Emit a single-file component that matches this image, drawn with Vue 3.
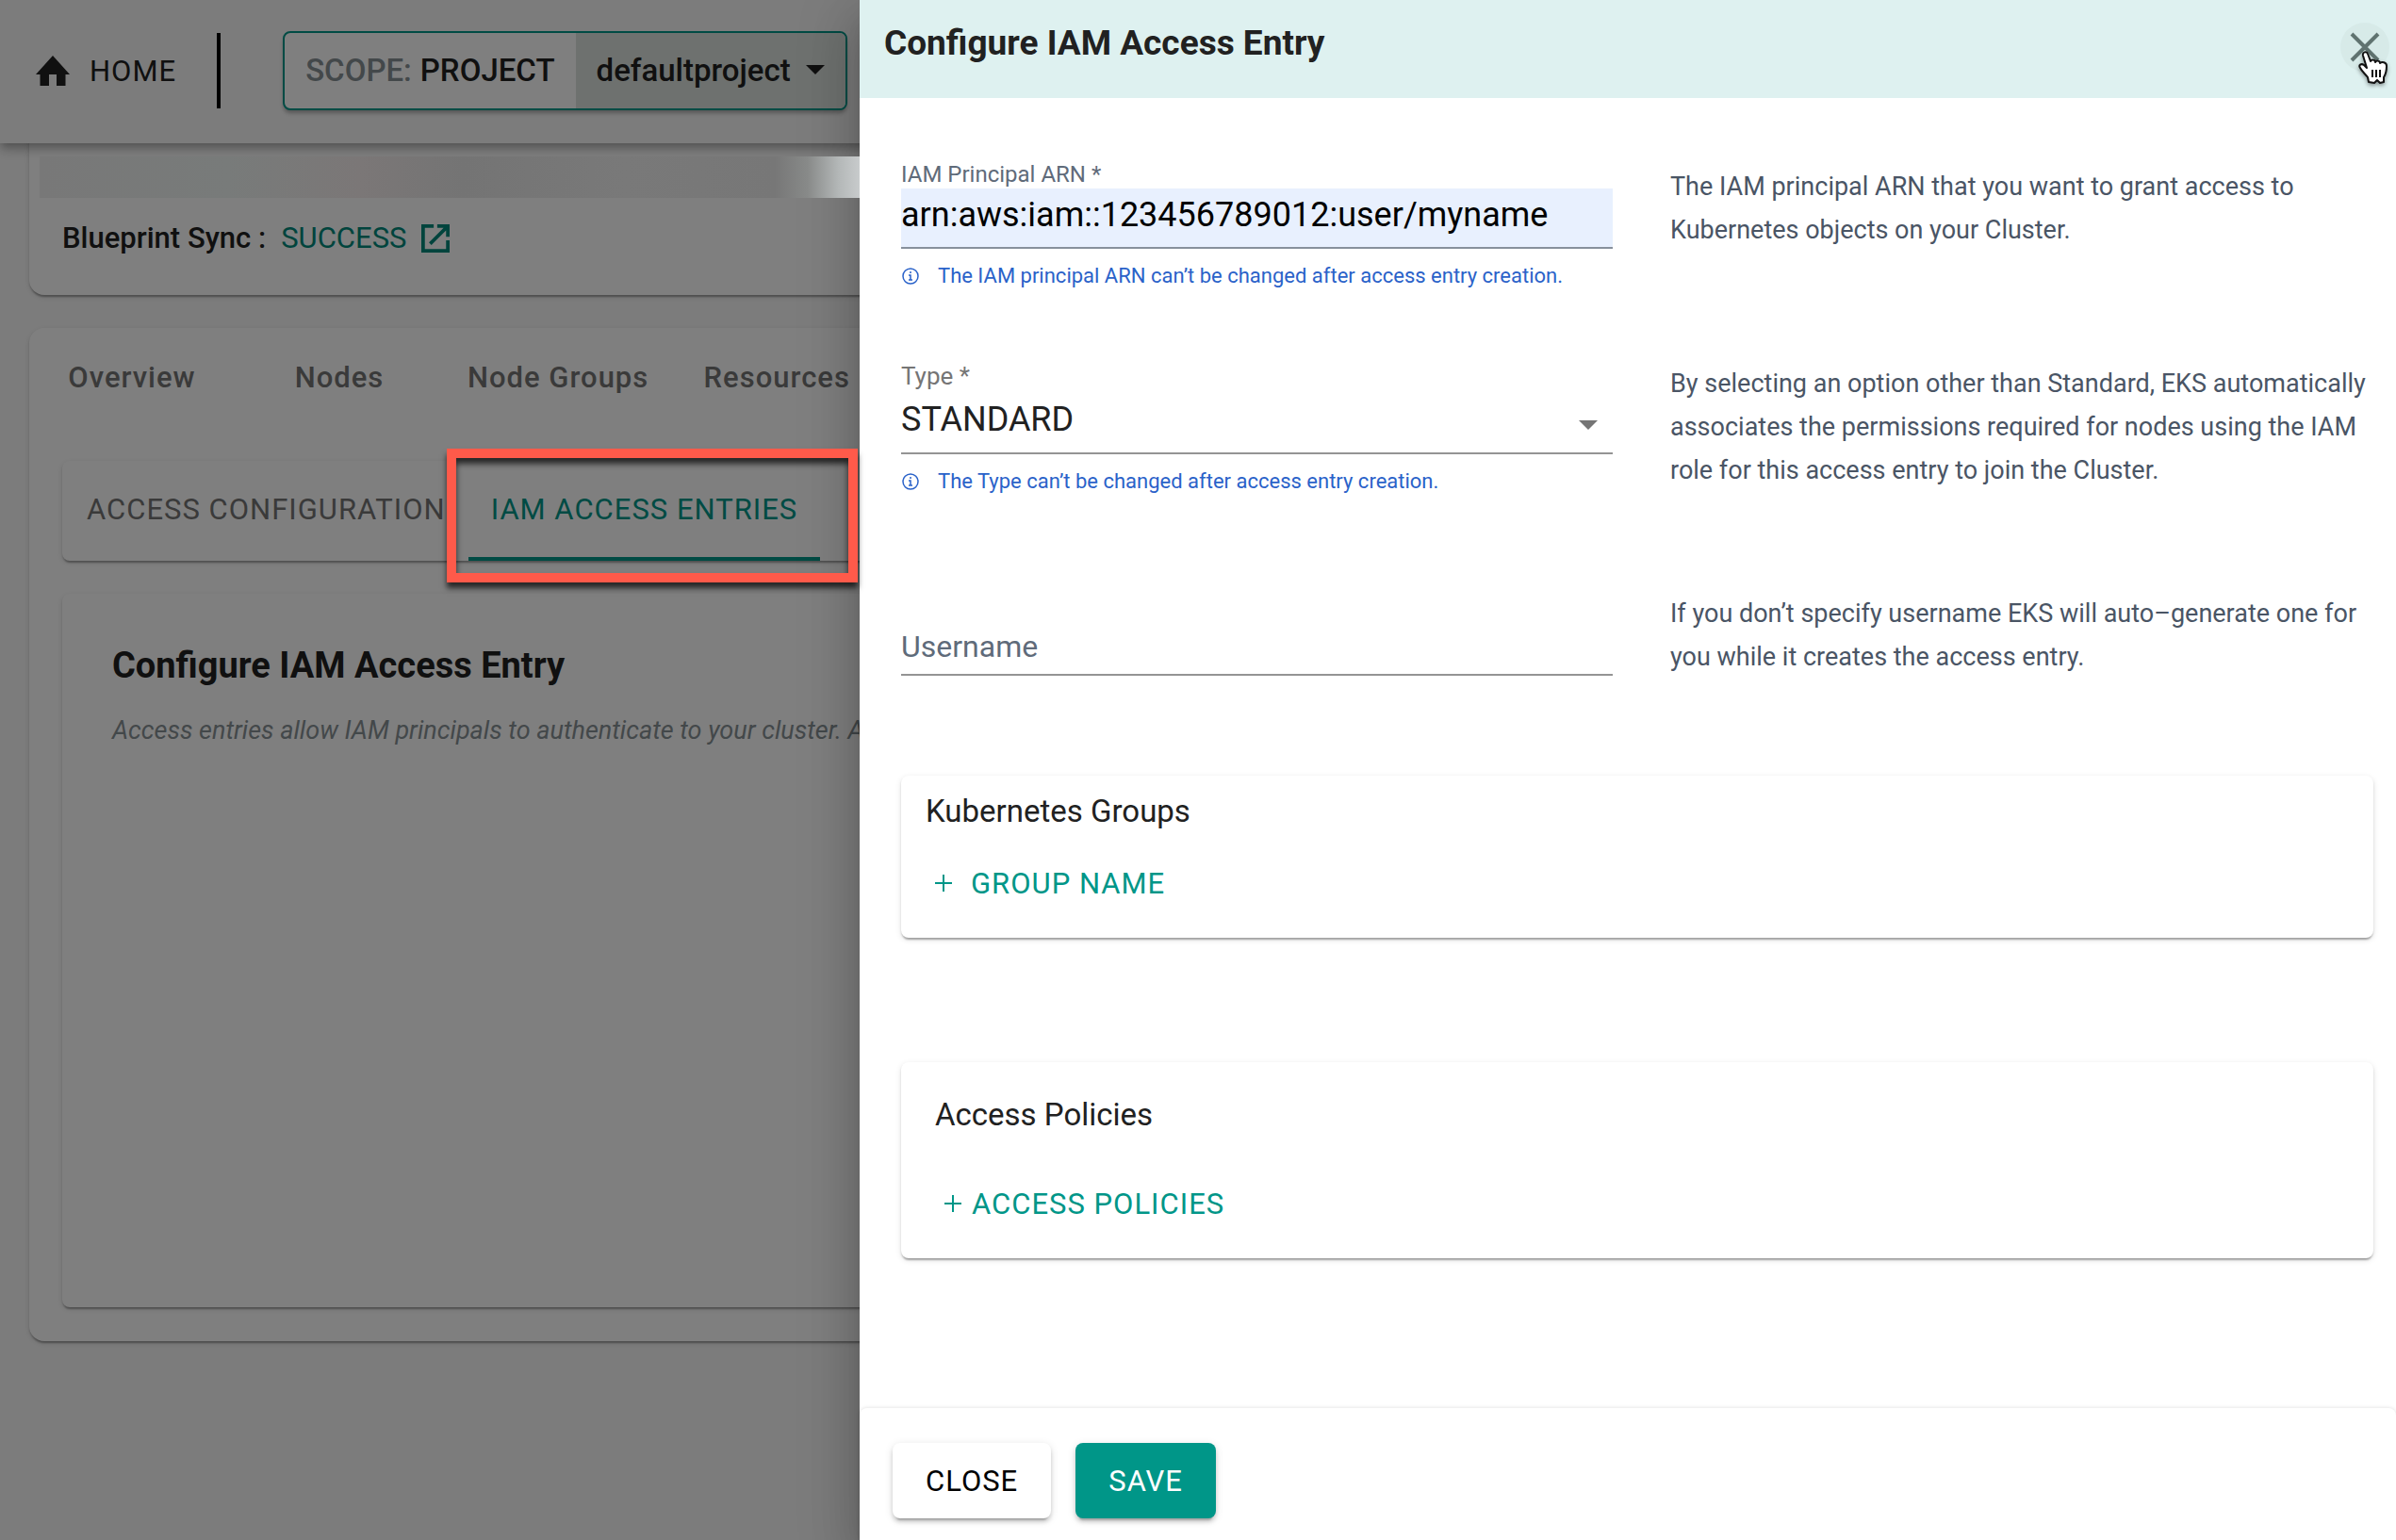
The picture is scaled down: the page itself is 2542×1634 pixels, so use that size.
<script setup>
import { ref } from 'vue'

const principalArn = ref('arn:aws:iam::123456789012:user/myname')
const entryType = ref('STANDARD')
const username = ref('')
const clusterTabs = ['Overview', 'Nodes', 'Node Groups', 'Resources']
</script>

<template>
  <div class="app">
    <div class="page">
      <header class="topbar">
        <a class="home" href="#">
          <svg width="40" height="40" viewBox="0 0 40 40" aria-hidden="true">
            <path d="M20 4 38 24h-4.500v12H24V24h-8v12H6.500V24H2z" fill="currentColor" />
          </svg>
          <span>HOME</span>
        </a>
        <span class="divider"></span>
        <button class="scope" type="button">
          <span class="scope-kind"><span class="muted">SCOPE:</span> PROJECT</span>
          <span class="scope-value">
            defaultproject
            <svg width="20" height="10" viewBox="0 0 20 10" aria-hidden="true"><path d="M0 0h20L10 10z" fill="currentColor" /></svg>
          </span>
        </button>
      </header>

      <section class="card summary">
        <span class="summary-key">Blueprint Sync :</span>
        <a class="summary-link" href="#">
          SUCCESS
          <svg width="30" height="30" viewBox="0 0 32 32" fill="none" stroke="currentColor" stroke-width="4" aria-hidden="true">
            <path d="M14 2H2v28h28V18" />
            <path d="M18 2h12v12M29 3 10 22" />
          </svg>
        </a>
      </section>

      <section class="card cluster">
        <nav class="tabs">
          <a v-for="tab in clusterTabs" :key="tab" href="#">{{ tab }}</a>
        </nav>
        <nav class="card subtabs">
          <a href="#">ACCESS CONFIGURATION</a>
          <a class="active" href="#">IAM ACCESS ENTRIES</a>
        </nav>
        <section class="card entries">
          <h2>Configure IAM Access Entry</h2>
          <p>Access entries allow IAM principals to authenticate to your cluster. Au</p>
        </section>
      </section>
    </div>

    <div class="backdrop"></div>
    <div class="redaction"></div>
    <div class="highlight"></div>

    <aside class="drawer">
      <header class="drawer-head">
        <h1>Configure IAM Access Entry</h1>
        <button class="dismiss" type="button" aria-label="Close panel">
          <svg width="32" height="32" viewBox="0 0 32 32" aria-hidden="true">
            <path d="M2 2 30 30M30 2 2 30" stroke="currentColor" stroke-width="4" />
          </svg>
        </button>
        <svg class="pointer" width="34" height="36" viewBox="0 0 34 36" aria-hidden="true">
          <path
            d="M11 33 10 28C7 24 4 22 2 18C0 15 3 13 6 15L9 18 5 5C4 1 9 0 10 3L13 11C14 9 18 9 18 12C19 10 23 10 23 13C25 11 30 12 30 16C30 21 29 25 27 28V33L23 34 20 31 17 34Z"
            fill="#fff" stroke="#111" stroke-width="2" stroke-linejoin="round"
          />
          <path d="M15 20v8M19 20v8M23 20v8" stroke="#111" stroke-width="2" />
        </svg>
      </header>

      <form class="drawer-body" @submit.prevent>
        <div class="row row-arn">
          <div class="field">
            <label for="arn">IAM Principal ARN *</label>
            <input id="arn" v-model="principalArn" class="filled" type="text" />
            <p class="hint">
              <svg width="20" height="20" viewBox="0 0 20 20" fill="none" stroke="currentColor" aria-hidden="true">
                <circle cx="10" cy="10" r="8" stroke-width="1.500" /><path d="M10 5v2M8 9h2v5M8 14h4" stroke-width="1.500" />
              </svg>
              The IAM principal ARN can’t be changed after access entry creation.
            </p>
          </div>
          <p class="help">The IAM principal ARN that you want to grant access to Kubernetes objects on your Cluster.</p>
        </div>

        <div class="row row-type">
          <div class="field">
            <label class="plain" for="type">Type *</label>
            <div class="select">
              <select id="type" v-model="entryType">
                <option>STANDARD</option>
              </select>
              <svg width="20" height="10" viewBox="0 0 20 10" aria-hidden="true"><path d="M0 0h20L10 10z" fill="#757575" /></svg>
            </div>
            <p class="hint">
              <svg width="20" height="20" viewBox="0 0 20 20" fill="none" stroke="currentColor" aria-hidden="true">
                <circle cx="10" cy="10" r="8" stroke-width="1.500" /><path d="M10 5v2M8 9h2v5M8 14h4" stroke-width="1.500" />
              </svg>
              The Type can’t be changed after access entry creation.
            </p>
          </div>
          <p class="help">By selecting an option other than Standard, EKS automatically associates the permissions required for nodes using the IAM role for this access entry to join the Cluster.</p>
        </div>

        <div class="row row-user">
          <div class="field">
            <input v-model="username" type="text" placeholder="Username" aria-label="Username" />
          </div>
          <p class="help">If you don’t specify username EKS will auto–generate one for you while it creates the access entry.</p>
        </div>

        <section class="card group groups">
          <h3>Kubernetes Groups</h3>
          <button class="add" type="button">
            <svg width="20" height="20" viewBox="0 0 20 20" aria-hidden="true"><path d="M10 1v18M1 10h18" stroke="currentColor" stroke-width="2" /></svg>
            GROUP NAME
          </button>
        </section>

        <section class="card group policies">
          <h3>Access Policies</h3>
          <button class="add" type="button">
            <svg width="20" height="20" viewBox="0 0 20 20" aria-hidden="true"><path d="M10 1v18M1 10h18" stroke="currentColor" stroke-width="2" /></svg>
            ACCESS POLICIES
          </button>
        </section>
      </form>

      <footer class="drawer-foot">
        <button class="btn" type="button">CLOSE</button>
        <button class="btn primary" type="button">SAVE</button>
      </footer>
    </aside>
  </div>
</template>

<style>
body {
  margin: 0;
  background: #f9f9f9;
}
</style>

<style scoped>
* {
  box-sizing: border-box;
}
.app {
  position: relative;
  min-height: 100vh;
  overflow: hidden;
  font-family: Roboto, "Liberation Sans", sans-serif;
  color: #212121;
}
h1, h2, h3, p {
  margin: 0;
}
a {
  color: inherit;
  text-decoration: none;
}
button, input, select {
  font: inherit;
  color: inherit;
}
svg {
  flex: none;
}
.card {
  background: #fff;
  border-radius: 8px;
  box-shadow: 0 4px 2px -2px rgba(0, 0, 0, 0.2), 0 2px 2px 0 rgba(0, 0, 0, 0.14), 0 2px 6px 0 rgba(0, 0, 0, 0.12);
}

/* Cluster page */
.page {
  position: absolute;
  inset: 0;
  background: #f9f9f9;
}
.topbar {
  position: relative;
  z-index: 1;
  display: flex;
  align-items: center;
  height: 152px;
  padding: 0 36px 2px;
  background: #f8f8f8;
  box-shadow: 0 4px 8px -2px rgba(0, 0, 0, 0.2), 0 8px 10px 0 rgba(0, 0, 0, 0.14), 0 2px 20px 0 rgba(0, 0, 0, 0.12);
}
.home {
  display: flex;
  align-items: center;
  gap: 19px;
  font-size: 31px;
  letter-spacing: 1px;
}
.divider {
  width: 4px;
  height: 80px;
  margin: 0 66px 0 43px;
  background: #000;
}
.scope {
  display: flex;
  align-items: stretch;
  height: 84px;
  padding: 0;
  overflow: hidden;
  border: 2px solid #009688;
  border-radius: 8px;
  background: #fff;
  font-size: 33px;
  font-weight: 500;
  box-shadow: 0 4px 4px -1px rgba(0, 0, 0, 0.3);
}
.scope-kind, .scope-value {
  display: flex;
  align-items: center;
  gap: 9px;
  padding: 0 22px 2px;
}
.scope-value {
  gap: 16px;
  background: #dce3df;
}
.muted {
  color: #879094;
}
.summary {
  display: flex;
  align-items: center;
  gap: 16px;
  height: 201px;
  margin: -40px 31px 0;
  padding: 80px 35px 0;
  border-radius: 16px;
  font-size: 31px;
}
.summary-key {
  font-weight: 500;
}
.summary-link {
  display: flex;
  align-items: center;
  gap: 16px;
  color: #00897b;
}
.cluster {
  margin: 35px 31px 0;
  padding: 33px 35px 36px;
  border-radius: 16px;
}
.tabs {
  display: flex;
  height: 108px;
  margin-left: -36px;
  font-size: 31px;
  font-weight: 500;
  letter-spacing: 1px;
  line-height: 40px;
  color: #757575;
}
.tabs a {
  min-width: 220px;
  padding: 0 26px;
  text-align: center;
}
.subtabs {
  display: flex;
  height: 106px;
  padding-left: 2px;
  font-size: 31px;
  letter-spacing: 1px;
  color: #757575;
}
.subtabs a {
  display: flex;
  align-items: center;
  padding: 0 24px;
  border-bottom: 4px solid transparent;
}
.subtabs .active {
  border-color: #009688;
  color: #009688;
}
.entries {
  min-height: 757px;
  margin-top: 35px;
  padding: 50px 53px;
}
.entries h2 {
  font-size: 38px;
  font-weight: 700;
  line-height: 52px;
}
.entries p {
  margin-top: 23px;
  font-size: 27px;
  font-style: italic;
  line-height: 40px;
  white-space: nowrap;
  color: #879094;
}

/* Layers over the page */
.backdrop {
  position: absolute;
  inset: 0;
  z-index: 2;
  background: rgba(0, 0, 0, 0.5);
}
.redaction {
  position: absolute;
  z-index: 5;
  top: 166px;
  left: 42px;
  width: 870px;
  height: 44px;
  background: linear-gradient(90deg, #787878 0, #787b7a 200px, #7b7777 340px, #747474 450px, #797979 620px, #777 780px, #888a89 815px, #b4b8b8 848px, #c8cbcc 870px);
}
.highlight {
  position: absolute;
  z-index: 5;
  top: 476px;
  left: 474px;
  width: 436px;
  height: 142px;
  border: 10px solid #ff5a4a;
  box-shadow: 0 6px 6px rgba(0, 0, 0, 0.7), inset 0 6px 6px rgba(0, 0, 0, 0.7);
}

/* Drawer */
.drawer {
  position: relative;
  z-index: 4;
  display: flex;
  flex-direction: column;
  min-height: 100vh;
  margin-left: 912px;
  background: #fff;
  box-shadow: 0 16px 20px -10px rgba(0, 0, 0, 0.2), 0 32px 48px 4px rgba(0, 0, 0, 0.14), 0 12px 60px 10px rgba(0, 0, 0, 0.12);
}
.drawer-head {
  position: relative;
  display: flex;
  align-items: flex-start;
  justify-content: space-between;
  height: 104px;
  padding: 24px 7px 0 26px;
  background: #def1f0;
}
.drawer-head h1 {
  font-size: 37px;
  font-weight: 700;
  line-height: 44px;
}
.dismiss {
  display: grid;
  place-items: center;
  width: 52px;
  height: 52px;
  padding: 0;
  border: 0;
  border-radius: 50%;
  background: #d7eae8;
  color: #607370;
}
.pointer {
  position: absolute;
  top: 54px;
  right: 6px;
  filter: drop-shadow(0 2px 2px rgba(0, 0, 0, 0.4));
}
.drawer-body {
  padding: 66px 24px 0 44px;
}
.row {
  display: grid;
  grid-template-columns: 755fr 746fr;
  column-gap: 61px;
  align-items: start;
}
.row-arn {
  min-height: 214px;
}
.row-type {
  min-height: 244px;
}
.row-user {
  min-height: 195px;
}
.row-arn .help {
  margin-top: 5px;
}
.row-user .field {
  margin-top: 25px;
}
.field label {
  display: block;
  height: 30px;
  font-size: 24px;
  line-height: 30px;
  color: #5f6b7a;
}
.field label.plain {
  height: 34px;
  font-size: 26px;
  color: #757575;
}
.field input, .field select {
  display: block;
  width: 100%;
  height: 64px;
  padding: 0 0 6px;
  border: 0;
  border-bottom: 2px solid #949494;
  border-radius: 0;
  outline: 0;
  appearance: none;
  background: transparent;
  font-size: 36px;
}
.field input.filled {
  border-color: #87909c;
  background: #e8f0fe;
  color: #000;
}
.field select {
  padding-bottom: 8px;
}
.field input::placeholder {
  font-size: 32px;
  color: #5f6b7a;
  opacity: 1;
}
.row-user input {
  padding: 2px 0 0;
}
.select {
  position: relative;
}
.select svg {
  position: absolute;
  top: 28px;
  right: 16px;
  pointer-events: none;
}
.hint {
  display: flex;
  align-items: center;
  gap: 19px;
  margin-top: 15px;
  font-size: 22px;
  line-height: 28px;
  color: #2a62c9;
}
.help {
  font-size: 27px;
  line-height: 46px;
  color: #4a5565;
}
.group h3 {
  font-size: 33px;
  font-weight: 400;
  line-height: 40px;
}
.groups {
  height: 172px;
  padding: 18px 26px;
}
.policies {
  height: 208px;
  margin-top: 132px;
  padding: 36px;
}
.add {
  display: flex;
  align-items: center;
  height: 40px;
  padding: 0 9px;
  border: 0;
  background: transparent;
  font-size: 31px;
  letter-spacing: 1px;
  color: #009688;
}
.groups .add {
  gap: 19px;
  margin-top: 36px;
}
.policies .add {
  gap: 10px;
  margin-top: 54px;
}
.drawer-foot {
  display: flex;
  gap: 26px;
  height: 140px;
  margin-top: auto;
  padding: 37px 35px 0;
  border-radius: 8px 8px 0 0;
  box-shadow: 0 0 4px rgba(0, 0, 0, 0.14);
}
.btn {
  height: 80px;
  padding: 0 35px;
  border: 0;
  border-radius: 8px;
  background: #fff;
  color: #000;
  font-size: 31px;
  letter-spacing: 1px;
  box-shadow: 0 6px 2px -4px rgba(0, 0, 0, 0.2), 0 4px 4px 0 rgba(0, 0, 0, 0.14), 0 2px 10px 0 rgba(0, 0, 0, 0.12);
}
.btn.primary {
  background: #009688;
  color: #fff;
}
</style>
